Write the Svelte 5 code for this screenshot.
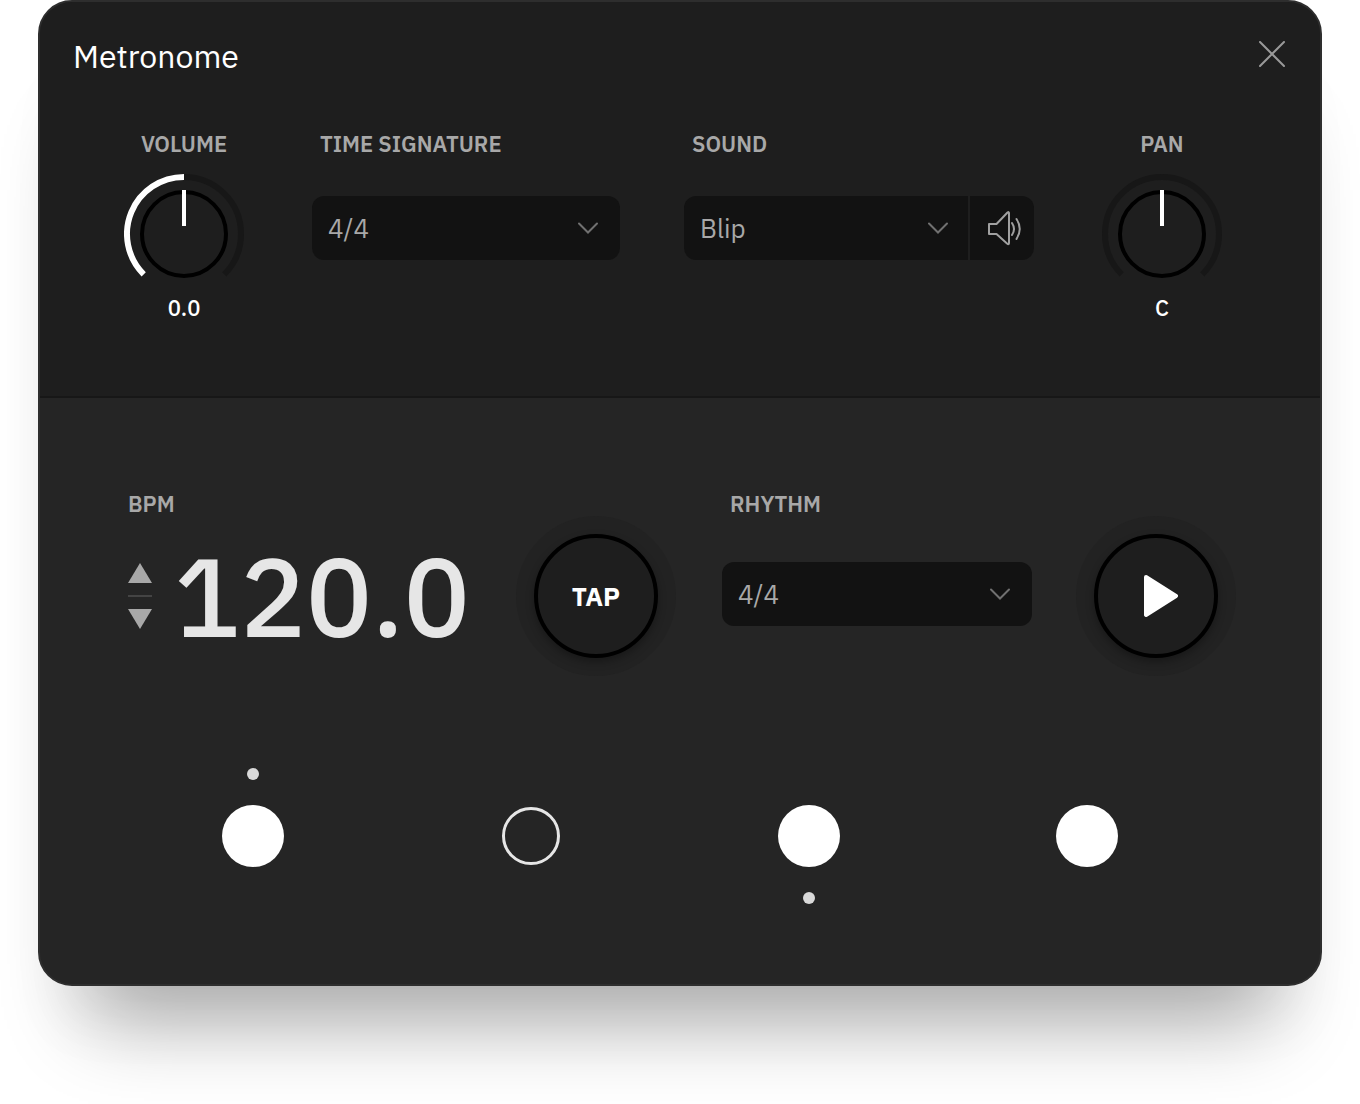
<script lang="ts">
	type Beat = { on: boolean; above: boolean; below: boolean }

	const signatures = ['2/4', '3/4', '4/4', '6/8']
	const sounds = ['Blip', 'Click', 'Wood']

	let volume = $state(0)
	let pan = $state(0)
	let signature = $state('4/4')
	let sound = $state('Blip')
	let rhythm = $state('4/4')
	let bpm = $state('120.0')
	let playing = $state(false)
	let beats = $state<Beat[]>([
		{ on: true, above: true, below: false },
		{ on: false, above: false, below: false },
		{ on: true, above: false, below: true },
		{ on: true, above: false, below: false }
	])
	let taps: number[] = []

	const panLabel = $derived(pan === 0 ? 'C' : pan < 0 ? `L${-pan}` : `R${pan}`)

	function point(angle: number) {
		const rad = ((angle - 90) * Math.PI) / 180
		return `${60 + 57 * Math.cos(rad)} ${60 + 57 * Math.sin(rad)}`
	}

	// angles are in degrees, 0 is straight up
	function arc(from: number, to: number) {
		const large = Math.abs(to - from) > 180 ? 1 : 0
		return `M ${point(from)} A 57 57 0 ${large} ${to > from ? 1 : 0} ${point(to)}`
	}

	function step(amount: number) {
		bpm = Math.max(20, (parseFloat(bpm) || 120) + amount).toFixed(1)
	}

	function tap() {
		taps = [...taps.slice(-3), Date.now()]
		if (taps.length < 2) return
		const average = (taps[taps.length - 1] - taps[0]) / (taps.length - 1)
		if (average < 3000) bpm = (60000 / average).toFixed(1)
		else taps = taps.slice(-1)
	}
</script>

{#snippet dial(angle: number, start: number)}
	<svg class="dial" viewBox="0 0 120 120" aria-hidden="true">
		<path d={arc(-135, 135)} fill="none" stroke="#171717" stroke-width="6" />
		{#if angle !== start}
			<path d={arc(start, angle)} fill="none" stroke="#fff" stroke-width="6" />
		{/if}
		<circle cx="60" cy="60" r="42" fill="#1e1e1e" stroke="#000" stroke-width="4" />
		<path d="M60 16V52" stroke="#fff" stroke-width="4" transform="rotate({angle} 60 60)" />
	</svg>
{/snippet}

{#snippet chevron()}
	<svg class="chevron" viewBox="0 0 20 12" aria-hidden="true">
		<path d="M1 1.5L10 10.5L19 1.5" />
	</svg>
{/snippet}

<div class="page">
	<main class="metronome">
		<section class="settings">
			<header>
				<h1>Metronome</h1>
				<button class="close" aria-label="Close">
					<svg viewBox="0 0 26 26"><path d="M1 1L25 25M25 1L1 25" /></svg>
				</button>
			</header>

			<div class="controls">
				<div class="knob">
					<label for="volume">VOLUME</label>
					<div class="knob-face">
						{@render dial(volume * 13.5, -135)}
						<input id="volume" type="range" min="-10" max="10" step="0.1" bind:value={volume} />
					</div>
					<output for="volume">{volume.toFixed(1)}</output>
				</div>

				<div class="choices">
					<div class="field signature">
						<label for="signature">TIME SIGNATURE</label>
						<div class="select">
							<select id="signature" bind:value={signature}>
								{#each signatures as item}<option>{item}</option>{/each}
							</select>
							{@render chevron()}
						</div>
					</div>
					<div class="field sound">
						<label for="sound">SOUND</label>
						<div class="sound-row">
							<div class="select">
								<select id="sound" bind:value={sound}>
									{#each sounds as item}<option>{item}</option>{/each}
								</select>
								{@render chevron()}
							</div>
							<button class="speaker" aria-label="Preview sound">
								<svg viewBox="0 0 40 40">
									<path d="M7 16V26H14.5L25 35.5Q27 37 27 35V5Q27 3.5 25.5 4.5L14.5 16Z" />
									<path d="M30 15Q34 21 30 27M34.5 11Q41 21 34.5 31" />
								</svg>
							</button>
						</div>
					</div>
				</div>

				<div class="knob">
					<label for="pan">PAN</label>
					<div class="knob-face">
						{@render dial(pan * 2.7, 0)}
						<input id="pan" type="range" min="-50" max="50" bind:value={pan} />
					</div>
					<output for="pan">{panLabel}</output>
				</div>
			</div>
		</section>

		<section class="player">
			<div class="transport">
				<div class="tempo">
					<label for="bpm">BPM</label>
					<div class="tempo-row">
						<div class="stepper">
							<button aria-label="Increase BPM" onclick={() => step(1)}>
								<svg viewBox="0 0 24 20"><path d="M12 0L24 20H0Z" /></svg>
							</button>
							<span class="rule"></span>
							<button aria-label="Decrease BPM" onclick={() => step(-1)}>
								<svg viewBox="0 0 24 20"><path d="M0 0H24L12 20Z" /></svg>
							</button>
						</div>
						<input id="bpm" type="text" inputmode="decimal" bind:value={bpm} />
					</div>
				</div>

				<div class="halo">
					<button class="round" onclick={tap}>TAP</button>
				</div>

				<div class="field rhythm">
					<label for="rhythm">RHYTHM</label>
					<div class="select">
						<select id="rhythm" bind:value={rhythm}>
							{#each signatures as item}<option>{item}</option>{/each}
						</select>
						{@render chevron()}
					</div>
				</div>

				<div class="halo">
					<button
						class="round"
						aria-label={playing ? 'Pause' : 'Play'}
						onclick={() => (playing = !playing)}
					>
						<svg viewBox="0 0 44 44">
							{#if playing}
								<path d="M9 4H17V40H9ZM27 4H35V40H27Z" />
							{:else}
								<path d="M12 3L42 22L12 41Z" />
							{/if}
						</svg>
					</button>
				</div>
			</div>

			<div class="beats">
				{#each beats as beat, i}
					<div class="beat">
						<span class="dot" class:lit={beat.above}></span>
						<button
							class:on={beat.on}
							aria-label="Beat {i + 1}"
							aria-pressed={beat.on}
							onclick={() => (beat.on = !beat.on)}
						></button>
						<span class="dot" class:lit={beat.below}></span>
					</div>
				{/each}
			</div>
		</section>
	</main>
</div>

<style>
	:global(body) {
		background: #fff;
	}

	.page {
		box-sizing: border-box;
		min-height: 100vh;
		padding: 0 38px 100px;
		overflow: hidden;
	}

	.metronome {
		border: 2px solid #2e2e2e;
		border-radius: 34px;
		background: #252525;
		box-shadow:
			0 84px 80px -50px rgba(0, 0, 0, 0.33),
			0 60px 60px -20px rgba(0, 0, 0, 0.04);
		color: #fff;
		font-family: 'IBM Plex Sans', Roboto, sans-serif;
	}

	button,
	input,
	select {
		font: inherit;
		color: inherit;
		margin: 0;
		padding: 0;
		border: 0;
		background: none;
	}

	button,
	select {
		cursor: pointer;
	}

	svg {
		display: block;
	}

	.settings {
		padding-bottom: 74px;
		border-bottom: 2px solid #171717;
		border-radius: 32px 32px 0 0;
		background: #1e1e1e;
	}

	header {
		display: flex;
		justify-content: space-between;
		align-items: flex-start;
		height: 108px;
		padding: 34px 35px 0 33px;
		box-sizing: border-box;
	}

	h1 {
		margin: 0;
		font-size: 32px;
		line-height: 40px;
		font-weight: 400;
	}

	.close {
		margin-top: 5px;
	}

	.close svg {
		width: 26px;
		height: 26px;
		fill: none;
		stroke: #999;
		stroke-width: 2;
		stroke-linecap: round;
	}

	.controls {
		display: flex;
		gap: 68px;
		padding: 20px 98px 0 84px;
	}

	label {
		font-size: 22px;
		line-height: 28px;
		font-weight: 600;
		color: #a8a8a8;
	}

	.knob {
		display: flex;
		flex-direction: column;
		align-items: center;
		width: 120px;
	}

	.knob-face {
		position: relative;
		margin-top: 16px;
	}

	.dial {
		width: 120px;
		height: 120px;
	}

	.knob-face input {
		position: absolute;
		inset: 0;
		width: 100%;
		height: 100%;
		opacity: 0;
		cursor: pointer;
	}

	output {
		font-size: 22px;
		line-height: 28px;
		font-weight: 500;
	}

	.choices {
		display: flex;
		flex: 1;
		gap: 64px;
	}

	.field {
		display: flex;
		flex-direction: column;
		gap: 38px;
		min-width: 0;
	}

	.field label {
		padding-left: 8px;
	}

	.signature {
		flex: 308 1 0;
	}

	.sound {
		flex: 350 1 0;
	}

	.select {
		position: relative;
		flex: 1;
	}

	select {
		display: block;
		width: 100%;
		height: 64px;
		padding: 0 56px 0 16px;
		border-radius: 12px;
		appearance: none;
		background: #121212;
		color: #a8a8a8;
		font-size: 26px;
	}

	.chevron {
		position: absolute;
		top: 26px;
		right: 22px;
		width: 20px;
		height: 12px;
		fill: none;
		stroke: #707070;
		stroke-width: 2;
		stroke-linecap: round;
		pointer-events: none;
	}

	.sound-row {
		display: flex;
		gap: 2px;
		border-radius: 12px;
		overflow: hidden;
	}

	.sound-row select {
		border-radius: 0;
	}

	.sound-row .chevron {
		right: 20px;
	}

	.speaker {
		width: 64px;
		height: 64px;
		background: #121212;
	}

	.speaker svg {
		width: 40px;
		height: 40px;
		margin: 0 auto;
		fill: none;
		stroke: #a0a0a0;
		stroke-width: 2;
		stroke-linecap: round;
		stroke-linejoin: round;
	}

	.transport {
		display: flex;
		align-items: flex-start;
		padding: 92px 84px 0 88px;
	}

	.tempo {
		display: flex;
		flex-direction: column;
		gap: 14px;
		flex: 1;
		min-width: 0;
	}

	.tempo-row {
		display: flex;
		align-items: center;
		gap: 22px;
	}

	.stepper {
		display: flex;
		flex-direction: column;
		gap: 12px;
		flex: none;
	}

	.stepper svg {
		width: 24px;
		height: 20px;
		fill: #a8a8a8;
	}

	.rule {
		height: 2px;
		background: #444;
	}

	.tempo input {
		flex: 1;
		width: 100%;
		min-width: 0;
		height: 128px;
		color: #e6e6e6;
		font-size: 110px;
		line-height: 128px;
		font-weight: 500;
	}

	.halo {
		display: grid;
		place-items: center;
		flex: none;
		width: 160px;
		height: 160px;
		margin-top: 26px;
		border-radius: 50%;
		background: #222;
	}

	.round {
		display: grid;
		place-items: center;
		box-sizing: border-box;
		width: 124px;
		height: 124px;
		border: 4px solid #000;
		border-radius: 50%;
		background: #1e1e1e;
		box-shadow: 0 4px 8px rgba(0, 0, 0, 0.3);
		font-size: 26px;
		font-weight: 700;
	}

	.round svg {
		width: 44px;
		height: 44px;
		fill: #fff;
		stroke: #fff;
		stroke-width: 4;
		stroke-linejoin: round;
	}

	.rhythm {
		gap: 44px;
		width: 310px;
		margin: 0 44px 0 46px;
	}

	.beats {
		display: grid;
		grid-template-columns: repeat(4, 1fr);
		padding: 92px 94px 80px 74px;
	}

	.beat {
		display: grid;
		grid-template-rows: 12px 62px 12px;
		place-items: center;
		row-gap: 25px;
	}

	.dot {
		width: 12px;
		height: 12px;
		border-radius: 50%;
	}

	.dot.lit {
		background: #d9d9d9;
	}

	.beat button {
		box-sizing: border-box;
		width: 58px;
		height: 58px;
		border: 3px solid #e6e6e6;
		border-radius: 50%;
	}

	.beat button.on {
		width: 62px;
		height: 62px;
		border: 0;
		background: #fff;
	}
</style>
